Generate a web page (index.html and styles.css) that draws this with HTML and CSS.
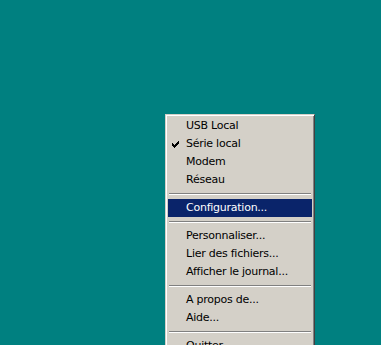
FILE: index.html
```html
<!DOCTYPE html>
<html lang="fr">
<head>
    <meta charset="UTF-8">
    <title>Menu</title>
    <link rel="stylesheet" href="styles.css">
</head>
<body>
    <div class="desktop">
        <ul class="menu">
            <li class="item">USB Local</li>
            <li class="item checked">
                <svg class="check" width="7" height="7" viewBox="0 0 7 7">
                    <path d="M0 2h1v1h1v1h1v-1h1v-1h1v-1h1v-1h1v3h-1v1h-1v1h-1v1h-1v1h-1v-1h-1v-1h-1v-1h-1z" fill="#000"/>
                </svg>Série local
            </li>
            <li class="item">Modem</li>
            <li class="item">Réseau</li>
            <li class="sep"></li>
            <li class="item active">Configuration...</li>
            <li class="sep"></li>
            <li class="item">Personnaliser...</li>
            <li class="item">Lier des fichiers...</li>
            <li class="item">Afficher le journal...</li>
            <li class="sep"></li>
            <li class="item">A propos de...</li>
            <li class="item">Aide...</li>
            <li class="sep"></li>
            <li class="item">Quitter</li>
        </ul>
    </div>
</body>
</html>
```
FILE: styles.css
```css
* {
    margin: 0;
    padding: 0;
}

html, body {
    width: 381px;
    height: 345px;
    overflow: hidden;
}

.desktop {
    width: 381px;
    height: 345px;
    background: #008080;
    position: relative;
    font-family: Tahoma, "DejaVu Sans", sans-serif;
    font-size: 11px;
    letter-spacing: -0.25px;
}

.menu {
    list-style: none;
    position: absolute;
    left: 165px;
    top: 114px;
    width: 144px;
    padding: 2px;
    background: #d4d0c8;
    border-top: 1px solid #d4d0c8;
    border-left: 1px solid #d4d0c8;
    border-right: 1px solid #404040;
    border-bottom: 1px solid #404040;
    box-shadow: inset 1px 1px 0 #ffffff, inset -1px -1px 0 #808080;
}

.item {
    height: 18px;
    line-height: 18px;
    padding-left: 18px;
    color: #000;
    position: relative;
    white-space: nowrap;
}

.item.active {
    background: #0a246a;
    color: #fff;
}

.check {
    position: absolute;
    left: 4px;
    top: 6px;
}

.sep {
    height: 0;
    margin: 4px 1px 4px;
    border-top: 1px solid #808080;
    border-bottom: 1px solid #ffffff;
}
```
